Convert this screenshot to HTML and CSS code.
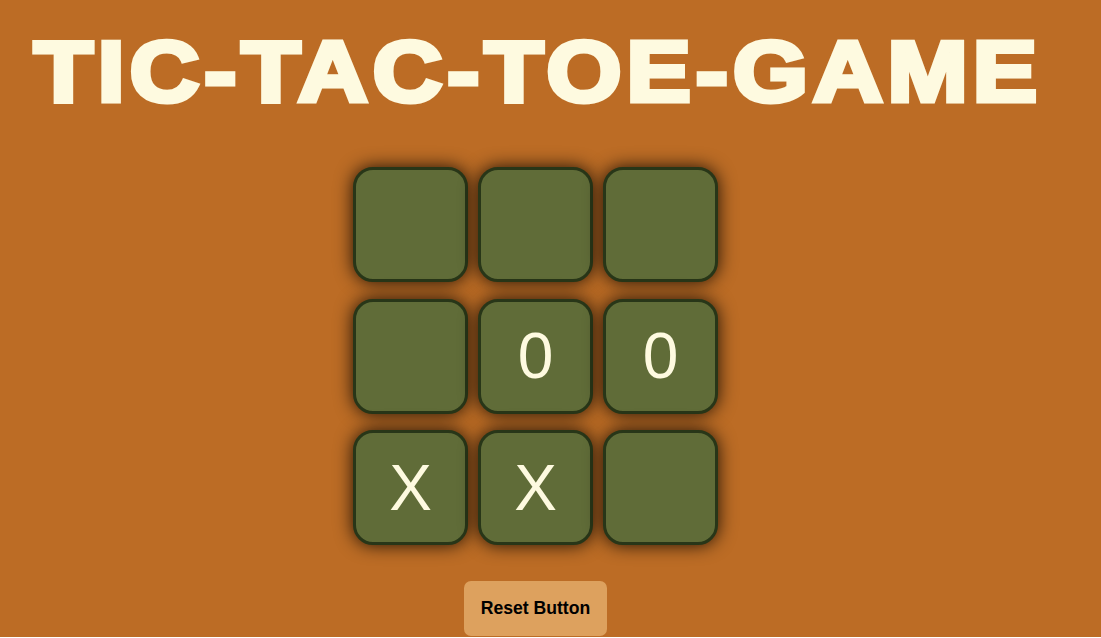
FILE: index.html
```html
<!DOCTYPE html>
<html lang="en">
<head>
<meta charset="utf-8">
<title>Tic-Tac-Toe</title>
<link rel="stylesheet" href="styles.css">
</head>
<body>
<main class="page">
  <h1 class="title">TIC-TAC-TOE-GAME</h1>
  <div class="board">
    <button class="cell"></button>
    <button class="cell"></button>
    <button class="cell"></button>
    <button class="cell"></button>
    <button class="cell">0</button>
    <button class="cell">0</button>
    <button class="cell">X</button>
    <button class="cell">X</button>
    <button class="cell"></button>
  </div>
  <button class="reset">Reset Button</button>
</main>
</body>
</html>
```
FILE: styles.css
```css
html {
  background: #ffffff;
}
body {
  margin: 0;
}
.page {
  height: 637px;
  overflow: hidden;
  background: #bc6c25;
  padding-right: 30px;
  display: flex;
  flex-direction: column;
  align-items: center;
  font-family: "Liberation Sans", Arial, sans-serif;
}
.title {
  margin: 16px -4.5px 0 0;
  font-size: 86px;
  font-weight: 700;
  line-height: 110px;
  color: #fefae0;
  letter-spacing: 4.5px;
  -webkit-text-stroke: 5px #fefae0;
  transform: scaleX(1.12);
  white-space: nowrap;
}
.board {
  margin-top: 41px;
  display: grid;
  grid-template-columns: repeat(3, 115px);
  grid-auto-rows: 115px;
  column-gap: 10px;
  row-gap: 16.5px;
}
.cell {
  box-sizing: border-box;
  width: 115px;
  height: 115px;
  border: 3px solid #283618;
  border-radius: 20px;
  background: #606c38;
  box-shadow: 0 0 18px rgba(0, 0, 0, 0.85);
  color: #fefae0;
  font-family: "Liberation Sans", Arial, sans-serif;
  font-size: 64px;
  padding: 0;
  display: flex;
  align-items: center;
  justify-content: center;
}
.reset {
  margin-top: 36px;
  padding: 17px 17px;
  border: none;
  border-radius: 7px;
  background: #dda15e;
  color: #000;
  font-family: "Liberation Sans", Arial, sans-serif;
  font-weight: 700;
  font-size: 17.6px;
}
```
